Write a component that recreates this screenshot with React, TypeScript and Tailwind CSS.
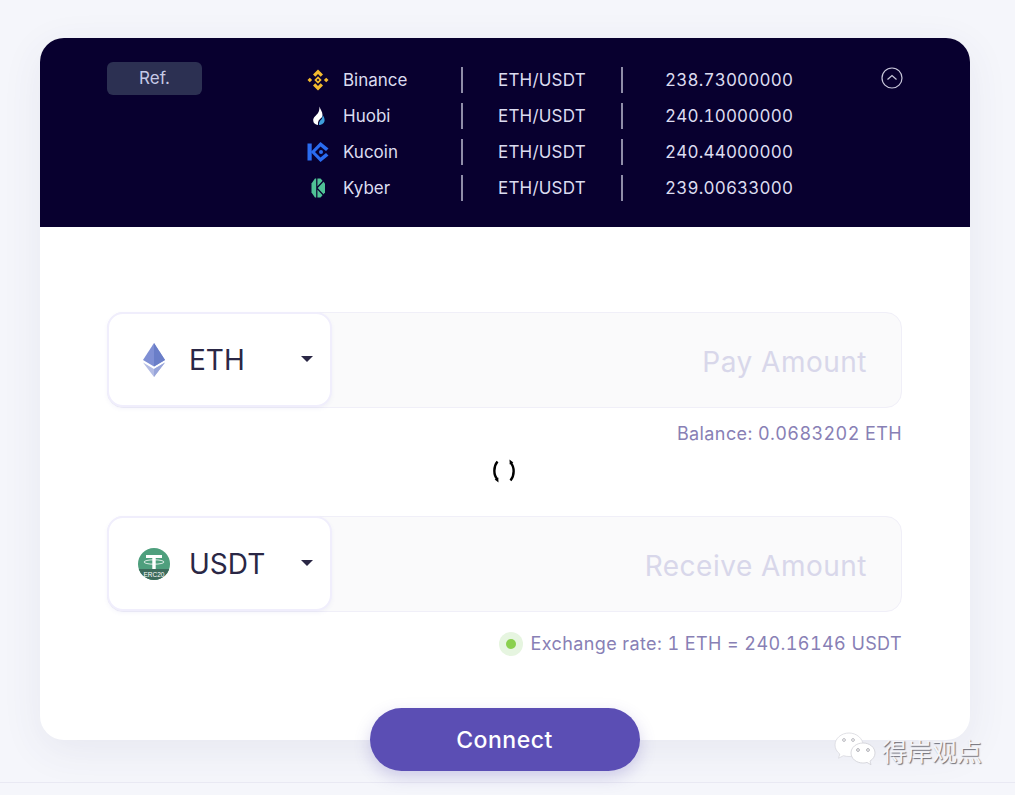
const EXCHANGES = [
  { name: "Binance", pair: "ETH/USDT", price: "238.73000000", icon: "binance" },
  { name: "Huobi", pair: "ETH/USDT", price: "240.10000000", icon: "huobi" },
  { name: "Kucoin", pair: "ETH/USDT", price: "240.44000000", icon: "kucoin" },
  { name: "Kyber", pair: "ETH/USDT", price: "239.00633000", icon: "kyber" },
];

// ── Icons ─────────────────────────────────────────────────────────────────────

function ExchangeIcon({ type }: { type: string }) {
  switch (type) {
    case "binance":
      return (
        <svg width="22" height="22" viewBox="0 0 22 22" fill="#f3ba2f">
          <path d="M11 .5l5 5-2.300 2.300L11 5.100 8.300 7.800 6 5.500z" />
          <path d="M11 21.500l-5-5 2.300-2.300 2.700 2.700 2.700-2.700 2.300 2.300z" />
          <path d="M.5 11l2.300-2.300L5.100 11l-2.300 2.300zM16.900 11l2.300-2.300 2.300 2.300-2.300 2.300z" />
          <path d="M11 7.300l3.700 3.700-3.700 3.700L7.300 11zM11 9.700L9.700 11l1.300 1.300 1.300-1.300z" fillRule="evenodd" />
        </svg>
      );
    case "huobi":
      return (
        <svg width="22" height="22" viewBox="0 0 22 22">
          <path d="M12.500 1.500c.6 3 3 4.700 3 8.500 0 1.500-.8 2.500-1.700 3.300-1.800 1.500-3.300 3.200-2.800 6.700-2.800-.2-4.800-2-4.800-4.800 0-3 3-4.500 4.800-7.200 1-1.600 1.500-3.700 1.500-6.500z" fill="#ffffff" />
          <path d="M15.500 10c1.400 1.500 2.100 3.200 2.100 5.200 0 2.700-2.400 4.600-5.600 4.800-.3-2.600.9-4.200 2.300-5.500.8-.9 1.300-2.100 1.200-4.500z" fill="#3f9fdc" />
        </svg>
      );
    case "kucoin":
      return (
        <svg width="22" height="22" viewBox="0 0 22 22" fill="#2a6cf0">
          <path d="M.5 2.500h4.200v17H.5z" />
          <path d="M13.500 1l8 6.500-2.500 2.500-5.500-4.500L8 11l5.500 5.500L19 12l2.500 2.500-8 6.500L3.800 11z" />
          <circle cx="14" cy="11" r="2" />
        </svg>
      );
    default:
      return (
        <svg width="22" height="22" viewBox="0 0 22 22">
          <path d="M8 1.500h5.500L18 6.500v9L13.500 20.500H8l-3.500-5v-9z" fill="#4fc296" />
          <path d="M9.800 1v20M9.800 11l6.500-7M9.800 11l6.500 7" stroke="#08002f" strokeWidth="1.200" fill="none" />
        </svg>
      );
  }
}

function EthIcon() {
  return (
    <svg width="24" height="34" viewBox="0 0 24 34">
      <path d="M12 0L1 17l11 6.500L23 17z" fill="#7f8fd4" />
      <path d="M12 0v23.500L23 17z" fill="#6a7ec8" />
      <path d="M1 19.500L12 34l11-14.500-11 6.500z" fill="#b4bce4" />
      <path d="M12 26v8l11-14.500z" fill="#98a5da" />
    </svg>
  );
}

function UsdtIcon() {
  return (
    <svg width="32" height="32" viewBox="0 0 32 32">
      <defs>
        <clipPath id="usdt-clip">
          <circle cx="16" cy="16" r="16" />
        </clipPath>
      </defs>
      <g clipPath="url(#usdt-clip)">
        <rect width="32" height="32" fill="#4e9f7d" />
        <rect y="21" width="32" height="11" fill="#3d6b5c" />
      </g>
      <path d="M8 7h16v3h-6.300v11h-3.400V10H8z" fill="#ffffff" />
      <ellipse cx="16" cy="14" rx="10" ry="2.200" fill="none" stroke="#ffffff" strokeWidth="0.800" />
      <text x="16" y="28.500" textAnchor="middle" fontSize="6.500" fill="#ffffff" fontFamily="Liberation Sans, sans-serif">ERC20</text>
    </svg>
  );
}

function Caret() {
  return (
    <svg width="12" height="6" viewBox="0 0 12 6">
      <path d="M0 0h12L6 6z" fill="#2a2745" />
    </svg>
  );
}

function WeChatIcon() {
  return (
    <svg width="42" height="36" viewBox="0 0 42 36">
      <path d="M15 1C7.500 1 1 6.300 1 13c0 3.600 1.800 6.700 4.800 9l-1.300 4.200 5-2.500c1.800.5 3.600.8 5.500.8 7.500 0 14-5 14-11.500S22.500 1 15 1z" fill="#ffffff" stroke="#d8d8de" strokeWidth="0.800" />
      <path d="M29 11c-6.600 0-12 4.400-12 10s5.400 10 12 10c1.400 0 2.700-.2 4-.6l4 2.300-1-3.600c3-1.900 5-4.800 5-8.100 0-5.600-5.400-10-12-10z" fill="#ffffff" stroke="#cfcfd6" strokeWidth="0.800" />
      <circle cx="10" cy="8" r="1.400" fill="none" stroke="#9a9aa2" strokeWidth="0.700" />
      <circle cx="19" cy="8" r="1.400" fill="none" stroke="#9a9aa2" strokeWidth="0.700" />
      <circle cx="24" cy="18" r="1.400" fill="none" stroke="#8a8a92" strokeWidth="0.700" />
      <circle cx="34" cy="18" r="1.400" fill="none" stroke="#8a8a92" strokeWidth="0.700" />
    </svg>
  );
}

function Spinner() {
  return (
    <svg width="24" height="24" viewBox="0 0 24 24" fill="none" stroke="#000000" strokeWidth="2.400">
      <path d="M5.500 2.500C1.300 7.500 1.300 16 5.500 20.500" />
      <path d="M6.500 23.500l-.3-5-3.500 2z" fill="#000000" stroke="none" />
      <path d="M18.500 21.500c4.200-5 4.200-13.500 0-18" />
      <path d="M17.500.5l.3 5 3.500-2z" fill="#000000" stroke="none" />
    </svg>
  );
}

// ── Sub-components ────────────────────────────────────────────────────────────

function AmountRow({ symbol, placeholder, icon }: { symbol: string; placeholder: string; icon: React.ReactNode }) {
  return (
    <div className="flex h-[96px] shrink-0 rounded-2xl border border-[#f0eff8] bg-[#fafafb]">
      <div className="flex items-center w-[225px] h-[95px] -ml-px -mt-px pl-[29px] rounded-2xl border-2 border-[#f0eefc] bg-white shadow-[0_2px_4px_rgba(90,80,180,0.06)]">
        <div className="flex justify-center w-[32px] shrink-0 mr-[19px]">{icon}</div>
        <span className="text-[28px] leading-none text-[#2a2745] mt-px">{symbol}</span>
        <div className="ml-auto mr-[17px] mb-[2px]">
          <Caret />
        </div>
      </div>
      <div className="flex-1 flex items-center justify-end pr-[34px] text-[28px] tracking-[0.5px] text-[#d8d7ea] pt-[3px]">
        {placeholder}
      </div>
    </div>
  );
}

// ── Screen ────────────────────────────────────────────────────────────────────

export default function App() {
  return (
    <div className="relative h-[795px] overflow-hidden bg-[#f5f6fb] pt-[38px] font-['Inter',sans-serif]">
      <div className="ml-[40px] w-[930px] h-[702px] rounded-[24px] bg-white shadow-[0_10px_40px_rgba(60,60,110,0.08)] flex flex-col">
        {/* Reference prices */}
        <div className="flex h-[189px] shrink-0 rounded-t-[24px] bg-[#08002f] pt-[24px] pl-[67px]">
          <div className="flex items-center justify-center w-[95px] h-[33px] rounded-md bg-[#2c3052] text-[17px] text-[#c6c9e6]">
            Ref.
          </div>
          <div className="flex flex-col ml-[105px]">
            {EXCHANGES.map((ex) => (
              <div key={ex.name} className="flex items-center h-[36px] text-[17px] text-[#dcdcf0]">
                <div className="flex justify-center w-[22px] shrink-0 mr-[14px]">
                  <ExchangeIcon type={ex.icon} />
                </div>
                <span className="w-[118px] mt-[2px]">{ex.name}</span>
                <div className="w-[2px] h-[26px] bg-[#8f8da8]" />
                <span className="w-[158px] pl-[35px] mt-[2px] tracking-[0.2px]">{ex.pair}</span>
                <div className="w-[2px] h-[26px] bg-[#8f8da8]" />
                <span className="pl-[42px] mt-[2px] tabular-nums tracking-[0.2px]">{ex.price}</span>
              </div>
            ))}
          </div>
          <svg className="ml-[88px] mt-[5px]" width="22" height="22" viewBox="0 0 22 22" fill="none" stroke="#c8c6da" strokeWidth="1.200">
            <circle cx="11" cy="11" r="10" />
            <path d="M6.500 12.500L11 8.500l4.500 4" />
          </svg>
        </div>

        {/* Swap form */}
        <div className="flex-1 flex flex-col pl-[67px] pr-[68px] pt-[85px]">
          <AmountRow symbol="ETH" placeholder="Pay Amount" icon={<EthIcon />} />
          <div className="mt-[15px] text-right text-[18px] leading-[22px] tracking-[0.4px] tabular-nums text-[#8880b5]">
            Balance: 0.0683202 ETH
          </div>
          <div className="flex justify-center mt-[14px] mb-[33px] pr-[2px]">
            <Spinner />
          </div>
          <AmountRow symbol="USDT" placeholder="Receive Amount" icon={<UsdtIcon />} />
          <div className="flex items-center justify-end gap-[7px] mt-[20px] text-[18px] leading-[24px] tracking-[0.4px] tabular-nums text-[#8880b5]">
            <span className="flex items-center justify-center w-[24px] h-[24px] rounded-full bg-[#e6f5e0]">
              <span className="w-[10px] h-[10px] rounded-full bg-[#8ad04e]" />
            </span>
            Exchange rate: 1 ETH = 240.16146 USDT
          </div>
          <button
            type="button"
            className="self-center mt-[52px] w-[270px] h-[63px] shrink-0 pt-[2px] rounded-full bg-[#5b4eb4] text-white text-[23px] font-medium tracking-[0.5px] shadow-[0_6px_16px_rgba(91,78,180,0.25)]"
          >
            Connect
          </button>
        </div>
      </div>

      {/* Footer rule */}
      <div className="mt-[42px] border-t border-[#e9e9f3]" />

      {/* Watermark */}
      <div className="absolute left-[834px] top-[732px] flex items-center gap-[6px]">
        <WeChatIcon />
        <span className="text-[25px] leading-none text-[#f4f4f8] font-['Noto_Sans_CJK_SC',sans-serif] [text-shadow:1px_1px_1px_#6f6f78]">
          得岸观点
        </span>
      </div>
    </div>
  );
}
